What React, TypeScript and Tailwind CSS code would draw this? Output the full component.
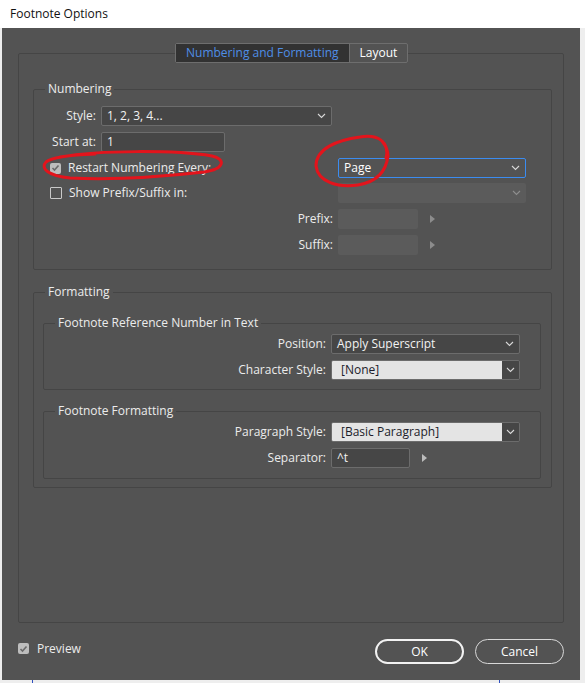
import type { ReactNode } from 'react'

const font = { fontFamily: '"Open Sans", "Noto Sans", sans-serif' }

function Chevron({ color = '#d8d8d8' }: { color?: string }) {
  return (
    <svg width="9" height="6" viewBox="0 0 9 6" className="shrink-0">
      <polyline points="1,1 4.5,4.5 8,1" fill="none" stroke={color} strokeWidth="1.1" />
    </svg>
  )
}

function Arrow({ color = '#8c8c8c' }: { color?: string }) {
  return (
    <svg width="5" height="8" viewBox="0 0 5 8" className="shrink-0">
      <polygon points="0,0 5,4 0,8" fill={color} />
    </svg>
  )
}

function Checkbox({ checked }: { checked?: boolean }) {
  if (checked) {
    return (
      <span className="flex h-[11px] w-[11px] shrink-0 items-center justify-center rounded-[2px] bg-[#bdbdbd]">
        <svg width="9" height="8" viewBox="0 0 9 8">
          <polyline points="1.5,4 3.5,6 7.5,1.5" fill="none" stroke="#6a6a6a" strokeWidth="1.6" />
        </svg>
      </span>
    )
  }
  return <span className="h-[12px] w-[12px] shrink-0 rounded-[1px] border border-[#c9c9c9]" />
}

function Group({ title, className, children }: { title: string; className?: string; children: ReactNode }) {
  return (
    <div className={`flex flex-col rounded-[2px] border border-[#454545] ${className ?? ''}`}>
      <span className="-mt-[9px] ml-[11px] self-start bg-[#535353] px-[3px] leading-[16px] text-[#ececec]">
        {title}
      </span>
      {children}
    </div>
  )
}

function Label({ w, children }: { w: string; children: ReactNode }) {
  return <span className={`${w} shrink-0 pr-[5px] text-right text-[#ececec]`}>{children}</span>
}

export default function App() {
  return (
    <div className="relative h-[683px] w-[585px] overflow-hidden bg-[#eeeeee] text-[12px]" style={font}>
      <div className="flex h-[28px] items-center bg-white pl-[10px] text-[#111]">Footnote Options</div>

      <div className="ml-[2px] flex h-[652px] w-[578px] flex-col bg-[#535353] px-[16px] pt-[25px]">
        {/* main tab panel */}
        <div className="flex h-[570px] flex-col rounded-[2px] border border-[#454545]">
          <div className="-mt-[11px] ml-[156px] flex h-[20px] self-start rounded-[2px] border border-[#6e6e6e] bg-[#535353]">
            <span className="flex items-center bg-[#323232] px-[10px] text-[#4f8ee6]">Numbering and Formatting</span>
            <span className="flex items-center border-l border-[#6e6e6e] px-[10px] text-white">Layout</span>
          </div>

          {/* Numbering */}
          <Group title="Numbering" className="ml-[14px] mt-[26px] h-[181px] w-[519px]">
            <div className="mt-[9px] flex h-[20px] items-center">
              <Label w="w-[67px]">Style:</Label>
              <div className="flex h-[20px] w-[231px] items-center justify-between rounded-[2px] border border-[#6c6c6c] bg-[#464646] pl-[5px] pr-[5px] text-[#f2f2f2]">
                <span>1, 2, 3, 4...</span>
                <Chevron />
              </div>
            </div>
            <div className="mt-[6px] flex h-[20px] items-center">
              <Label w="w-[67px]">Start at:</Label>
              <div className="flex h-[20px] w-[124px] items-center rounded-[2px] border border-[#6c6c6c] bg-[#464646] pl-[5px] text-[#f2f2f2]">
                1
              </div>
            </div>
            <div className="mt-[6px] flex h-[20px] items-center">
              <div className="flex w-[304px] items-center gap-[7px] pl-[16px] text-[#ececec]">
                <Checkbox checked />
                <span>Restart Numbering Every:</span>
              </div>
              <div className="flex h-[20px] w-[188px] items-center justify-between rounded-[2px] border border-[#3b8cf0] bg-[#535353] pl-[5px] pr-[5px] text-white">
                <span>Page</span>
                <Chevron />
              </div>
            </div>
            <div className="mt-[5px] flex h-[20px] items-center">
              <div className="flex w-[304px] items-center gap-[7px] pl-[16px] text-[#ececec]">
                <Checkbox />
                <span>Show Prefix/Suffix in:</span>
              </div>
              <div className="flex h-[20px] w-[188px] items-center justify-end rounded-[2px] bg-[#5b5b5b] pr-[5px]">
                <Chevron color="#8e8e8e" />
              </div>
            </div>
            <div className="mt-[6px] flex h-[20px] items-center">
              <Label w="w-[304px]">Prefix:</Label>
              <div className="h-[20px] w-[80px] rounded-[2px] bg-[#5b5b5b]" />
              <span className="ml-[12px]">
                <Arrow />
              </span>
            </div>
            <div className="mt-[6px] flex h-[20px] items-center">
              <Label w="w-[304px]">Suffix:</Label>
              <div className="h-[20px] w-[80px] rounded-[2px] bg-[#5b5b5b]" />
              <span className="ml-[12px]">
                <Arrow />
              </span>
            </div>
          </Group>

          {/* Formatting */}
          <Group title="Formatting" className="ml-[14px] mt-[22px] h-[196px] w-[519px]">
            <Group title="Footnote Reference Number in Text" className="ml-[9px] mt-[23px] h-[67px] w-[498px]">
              <div className="mt-[3px] flex h-[20px] items-center">
                <Label w="w-[287px]">Position:</Label>
                <div className="flex h-[20px] w-[189px] items-center justify-between rounded-[2px] border border-[#6c6c6c] bg-[#464646] pl-[5px] pr-[5px] text-[#f2f2f2]">
                  <span>Apply Superscript</span>
                  <Chevron />
                </div>
              </div>
              <div className="mt-[6px] flex h-[20px] items-center">
                <Label w="w-[287px]">Character Style:</Label>
                <div className="flex h-[20px] w-[189px] overflow-hidden rounded-[2px] border border-[#6c6c6c]">
                  <span className="flex flex-1 items-center bg-[#e4e4e4] pl-[9px] text-[#1c1c2a]">[None]</span>
                  <span className="flex w-[17px] items-center justify-center bg-[#464646]">
                    <Chevron />
                  </span>
                </div>
              </div>
            </Group>
            <Group title="Footnote Formatting" className="ml-[9px] mt-[21px] h-[68px] w-[498px]">
              <div className="mt-[3px] flex h-[20px] items-center">
                <Label w="w-[287px]">Paragraph Style:</Label>
                <div className="flex h-[20px] w-[189px] overflow-hidden rounded-[2px] border border-[#6c6c6c]">
                  <span className="flex flex-1 items-center bg-[#e4e4e4] pl-[9px] text-[#1c1c2a]">[Basic Paragraph]</span>
                  <span className="flex w-[17px] items-center justify-center bg-[#464646]">
                    <Chevron />
                  </span>
                </div>
              </div>
              <div className="mt-[6px] flex h-[20px] items-center">
                <Label w="w-[287px]">Separator:</Label>
                <div className="flex h-[20px] w-[79px] items-center rounded-[2px] border border-[#6c6c6c] bg-[#464646] pl-[5px] text-[#f2f2f2]">
                  ^t
                </div>
                <span className="ml-[12px]">
                  <Arrow color="#bcbcbc" />
                </span>
              </div>
            </Group>
          </Group>
        </div>

        {/* footer */}
        <div className="mt-[16px] flex items-center">
          <div className="mb-[6px] flex items-center gap-[8px] text-[#ececec]">
            <Checkbox checked />
            <span>Preview</span>
          </div>
          <button className="ml-auto mr-[11px] flex h-[25px] w-[89px] items-center justify-center rounded-full border-2 border-[#f2f2f2] text-white">
            OK
          </button>
          <button className="flex h-[25px] w-[89px] items-center justify-center rounded-full border border-[#d8d8d8] text-white">
            Cancel
          </button>
        </div>
      </div>

      <div className="absolute bottom-0 left-[32px] h-[3px] w-px bg-[#3050c0]" />
      <div className="absolute bottom-0 left-[499px] h-[3px] w-px bg-[#3050c0]" />

      {/* red hand-drawn annotations */}
      <svg className="pointer-events-none absolute left-0 top-0" width="585" height="683">
        <path
          d="M60 157 C100 150 175 150 212 156 C226 159 225 169 204 172 C160 177 110 180 70 178 C48 176 40 168 46 162 C52 157 70 155 95 154"
          fill="none"
          stroke="#e3141c"
          strokeWidth="3"
          strokeLinecap="round"
        />
        <path
          d="M386 158 C390 142 378 134 360 137 C338 140 316 148 316 166 C318 182 338 188 358 185 C376 182 386 172 388 156 C388 150 386 146 382 141"
          fill="none"
          stroke="#e3141c"
          strokeWidth="3"
          strokeLinecap="round"
        />
      </svg>
    </div>
  )
}
